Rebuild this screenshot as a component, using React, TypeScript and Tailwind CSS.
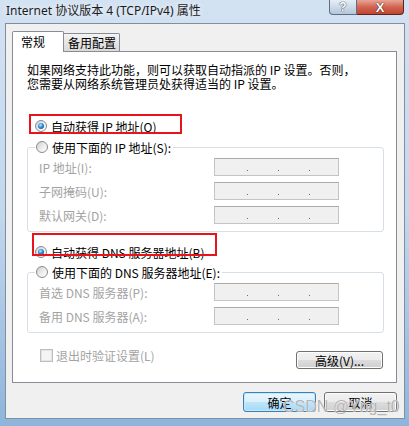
import React from "react";

const CJK = "font-['Noto_Sans_CJK_SC','Noto_Sans',sans-serif]";

// Win7 风格单选框
function Radio({ checked = false }: { checked?: boolean }) {
  return (
    <span className="w-[12px] h-[12px] rounded-full border border-[#8b8b8b] bg-gradient-to-br from-[#cdcdcd] via-[#ececec] to-[#ffffff] flex items-center justify-center shrink-0">
      {checked && (
        <span className="w-[6px] h-[6px] rounded-full bg-[radial-gradient(circle_at_40%_35%,#b8eeff_0%,#2b8bd6_45%,#0c4782_100%)]" />
      )}
    </span>
  );
}

// 禁用状态的 IP 输入框
function IpBox() {
  return (
    <div className="w-[125px] h-[18px] border border-[#c4c4c4] border-t-[#a9a9a9] bg-[#f0f0f0] flex items-start pl-[32px] pt-[11px] gap-[30px]">
      <span className="w-[1px] h-[1px] bg-[#6b6b6b]" />
      <span className="w-[1px] h-[1px] bg-[#6b6b6b]" />
      <span className="w-[1px] h-[1px] bg-[#6b6b6b]" />
    </div>
  );
}

function FieldRow({ label }: { label: string }) {
  return (
    <div className="flex items-center h-[18px] pl-[11px]">
      <span className="w-[175px] text-[#a3a3a3] leading-[13px]">{label}</span>
      <IpBox />
    </div>
  );
}

function WinButton({ children, primary = false, className = "" }: { children: React.ReactNode; primary?: boolean; className?: string }) {
  return (
    <button
      className={
        primary
          ? `rounded-[3px] border border-[#3c7fb1] bg-[linear-gradient(#eaf6fd_0%,#d9f0fc_50%,#bee6fd_50%,#a7d9f5_100%)] shadow-[inset_0_0_0_1px_#c2eaff] text-[12px] leading-[13px] text-black flex items-center justify-center ${className}`
          : `rounded-[3px] border border-[#707070] bg-[linear-gradient(#f2f2f2_0%,#ebebeb_50%,#dddddd_50%,#cfcfcf_100%)] shadow-[inset_0_0_0_1px_#fcfcfc] text-[12px] leading-[13px] text-black flex items-center justify-center ${className}`
      }
    >
      {children}
    </button>
  );
}

function Legend({ label }: { label: string }) {
  return (
    <div className="-mt-[9px] ml-[7px] self-start bg-white pl-[1px] pr-[2px] h-[16px] flex items-center gap-[4px]">
      <Radio />
      <span className="leading-[13px] text-black">{label}</span>
    </div>
  );
}

export default function App() {
  return (
    <div className={`relative w-[409px] h-[426px] overflow-hidden bg-gradient-to-b from-[#d3e2f2] via-[#c3d7ed] to-[#8fb4db] ${CJK} text-[12px]`}>
      {/* 标题栏 */}
      <div className="flex h-[23px]">
        <span className="pl-[6px] pt-[3px] text-[12px] leading-[16px] text-[#1b1b1b] font-['Noto_Sans','Noto_Sans_CJK_SC',sans-serif] [text-shadow:0_0_6px_#ffffff]">
          Internet 协议版本 4 (TCP/IPv4) 属性
        </span>
        <div className="ml-auto mr-[5px] flex items-start">
          <div className="w-[28px] h-[15px] border border-t-0 border-[#5d6f84] rounded-bl-[4px] bg-gradient-to-b from-[#e6eef7] to-[#b4c6da] flex items-center justify-center text-[12px] font-bold leading-none text-white font-['Liberation_Sans',sans-serif] [text-shadow:0_0_1px_#2d3c4e,0_0_1px_#2d3c4e]">
            ?
          </div>
          <div className="w-[47px] h-[15px] border border-t-0 border-l-0 border-[#5b2620] rounded-br-[4px] bg-gradient-to-b from-[#e8a596] via-[#d16451] to-[#c2442f] flex items-center justify-center text-[13px] font-bold leading-none text-white font-['Liberation_Sans',sans-serif] [text-shadow:0_0_1px_#3a1410,0_0_1px_#3a1410]">
            X
          </div>
        </div>
      </div>

      {/* 客户区 */}
      <div className="ml-[5px] w-[400px] h-[396px] border border-[#7d8fa3] bg-[#f0f0f0] pt-[7px] pl-[6px]">
        {/* 选项卡 */}
        <div className="flex items-end h-[20px]">
          <div className="relative z-10 -mb-[1px] w-[52px] h-[21px] bg-white border border-b-0 border-[#898c95] rounded-t-[2px] pl-[8px] flex items-center">
            常规
          </div>
          <div className="w-[56px] h-[18px] border border-l-0 border-b-0 border-[#898c95] rounded-tr-[2px] bg-gradient-to-b from-[#f3f3f3] to-[#d9d9d9] pl-[4px] flex items-center">
            备用配置
          </div>
        </div>

        {/* 面板 */}
        <div className="w-[385px] h-[332px] border border-[#898c95] bg-white flex flex-col">
          <p className="mt-[11px] ml-[14px] leading-[14px] text-black whitespace-nowrap">
            <span className="block">如果网络支持此功能，则可以获取自动指派的 IP 设置。否则，</span>
            <span className="block">您需要从网络系统管理员处获得适当的 IP 设置。</span>
          </p>

          <div className="relative mt-[27px] ml-[22px] h-[16px] flex items-center gap-[4px] self-start">
            <Radio checked />
            <span className="leading-[13px]">自动获得 IP 地址(O)</span>
            <span className="absolute left-[-6px] top-[-4px] w-[153px] h-[20px] border-2 border-[#e8141c] pointer-events-none" />
          </div>

          <div className="mt-[13px] ml-[14px] w-[357px] border border-[#d5dfe5] rounded-[3px] flex flex-col pb-[7px]">
            <Legend label="使用下面的 IP 地址(S):" />
            <div className="mt-[3px] flex flex-col gap-[6px]">
              <FieldRow label="IP 地址(I):" />
              <FieldRow label="子网掩码(U):" />
              <FieldRow label="默认网关(D):" />
            </div>
          </div>

          <div className="relative mt-[12px] ml-[22px] h-[16px] flex items-center gap-[4px] self-start">
            <Radio checked />
            <span className="leading-[13px]">自动获得 DNS 服务器地址(B)</span>
            <span className="absolute left-[-3px] top-[-11px] w-[185px] h-[23px] border-2 border-[#e8141c] pointer-events-none" />
          </div>

          <div className="mt-[12px] ml-[14px] w-[357px] border border-[#d5dfe5] rounded-[3px] flex flex-col pb-[7px]">
            <Legend label="使用下面的 DNS 服务器地址(E):" />
            <div className="mt-[3px] flex flex-col gap-[6px]">
              <FieldRow label="首选 DNS 服务器(P):" />
              <FieldRow label="备用 DNS 服务器(A):" />
            </div>
          </div>

          <div className="mt-[16px] ml-[27px] mr-[13px] flex items-start justify-between">
            <div className="flex items-center gap-[3px] h-[13px]">
              <span className="w-[13px] h-[13px] border border-[#bdbdbd] bg-[#f4f4f4] shadow-[inset_0_0_0_1px_#e4e4e4]" />
              <span className="leading-[13px] text-[#a3a3a3]">退出时验证设置(L)</span>
            </div>
            <WinButton className="mt-[2px] w-[87px] h-[18px]">高级(V)...</WinButton>
          </div>
        </div>

        {/* 底部按钮 */}
        <div className="mt-[9px] w-[385px] flex justify-end gap-[8px]">
          <WinButton primary className="w-[73px] h-[20px]">确定</WinButton>
          <WinButton className="w-[73px] h-[20px]">取消</WinButton>
        </div>
      </div>

      {/* 水印 */}
      <span className="absolute left-[283px] top-[399px] text-[16px] leading-[16px] text-[#ababab]/90 font-['Liberation_Sans',sans-serif] [text-shadow:0_0_1px_#ffffff] pointer-events-none whitespace-nowrap">
        CSDN @Yng_t0
      </span>
    </div>
  );
}
